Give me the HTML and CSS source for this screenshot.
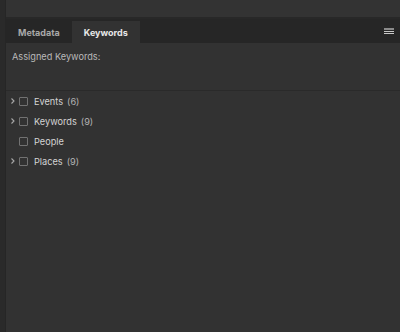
FILE: index.html
```html
<!DOCTYPE html>
<html lang="en">
<head>
  <meta charset="UTF-8" />
  <title>Keywords</title>
  <link rel="stylesheet" href="styles.css">
</head>
<body>
  <div class="edge"></div>
  <div class="panel">
    <div class="top-bar"></div>
    <div class="tab-bar">
      <div class="tab">Metadata</div>
      <div class="tab active">Keywords</div>
      <div class="menu-btn">
        <svg width="10" height="7" viewBox="0 0 10 7">
          <rect x="0" y="0" width="10" height="2" fill="#8a8a8a" />
          <rect x="0" y="3" width="10" height="1" fill="#c8c8c8" />
          <rect x="0" y="5" width="10" height="1" fill="#c8c8c8" />
        </svg>
      </div>
    </div>

    <div class="assigned">Assigned Keywords:</div>

    <ul class="keyword-list">
      <li class="row">
        <span class="chevron"><svg width="4" height="6" viewBox="0 0 4 6"><path d="M0.5 0.5 L3 3 L0.5 5.5" fill="none" stroke="#a8a8a8" stroke-width="1.1" /></svg></span>
        <span class="check"></span><span class="name">Events</span><span class="count">(6)</span>
      </li>
      <li class="row">
        <span class="chevron"><svg width="4" height="6" viewBox="0 0 4 6"><path d="M0.5 0.5 L3 3 L0.5 5.5" fill="none" stroke="#a8a8a8" stroke-width="1.1" /></svg></span>
        <span class="check"></span><span class="name">Keywords</span><span class="count">(9)</span>
      </li>
      <li class="row">
        <span class="chevron"></span>
        <span class="check"></span><span class="name">People</span>
      </li>
      <li class="row">
        <span class="chevron"><svg width="4" height="6" viewBox="0 0 4 6"><path d="M0.5 0.5 L3 3 L0.5 5.5" fill="none" stroke="#a8a8a8" stroke-width="1.1" /></svg></span>
        <span class="check"></span><span class="name">Places</span><span class="count">(9)</span>
      </li>
    </ul>
  </div>
</body>
</html>
```

FILE: styles.css
```css
html, body {
  margin: 0;
  padding: 0;
  height: 100%;
}

body {
  font-family: Inter, 'Noto Sans', sans-serif;
  font-size: 9.2px;
  background-color: #323232;
  display: flex;
  overflow: hidden;
}

.edge {
  width: 5px;
  background-color: #2a2a2a;
  border-right: 1px solid #262626;
}

.panel {
  flex: 1;
  display: flex;
  flex-direction: column;
}

.top-bar {
  height: 17px;
  background-color: #333;
  border-bottom: 2px solid #282828;
}

.tab-bar {
  height: 24px;
  background-color: #262626;
  display: flex;
  align-items: flex-end;
}

.tab {
  height: 22px;
  display: flex;
  align-items: center;
  padding: 0 12px;
  color: #a8a8a8;
  font-weight: 700;
  font-size: 9px;
}

.tab.active {
  background-color: #323232;
  color: #e8e8e8;
}

.menu-btn {
  margin-left: auto;
  align-self: center;
  margin-right: 6px;
  display: flex;
}

.assigned {
  color: #b9b9b9;
  padding: 8px 0 0 6px;
  height: 39px;
  border-bottom: 1px solid #2a2a2a;
}

.keyword-list {
  list-style: none;
  margin: 0;
  padding: 0;
}

.row {
  height: 20px;
  display: flex;
  align-items: center;
  color: #d4d4d4;
}

.chevron {
  width: 13px;
  padding-left: 5px;
  box-sizing: border-box;
  display: flex;
}

.check {
  width: 7px;
  height: 7px;
  border: 1px solid #727272;
  border-radius: 1px;
  margin-right: 6px;
}

.count {
  margin-left: 4px;
  color: #b4b4b4;
}
```
